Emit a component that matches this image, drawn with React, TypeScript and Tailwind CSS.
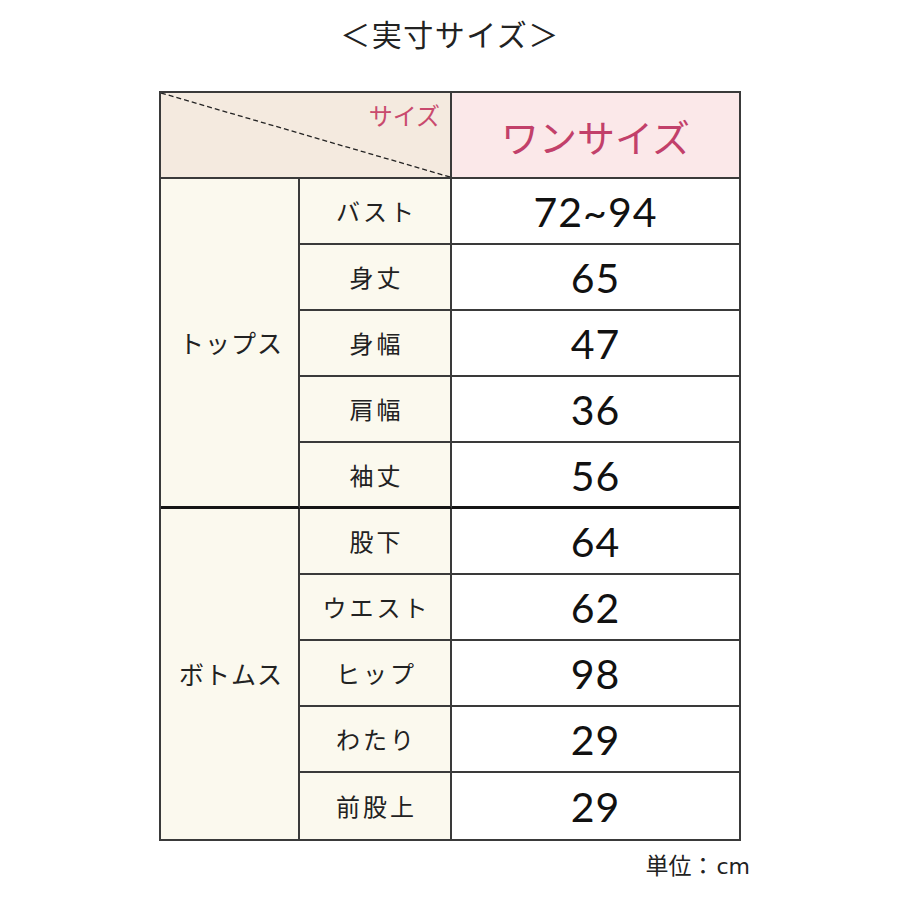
import type { ReactNode } from "react";

type Row = { label: string; value: string };

const TOPS: Row[] = [
  { label: "バスト", value: "72~94" },
  { label: "身丈", value: "65" },
  { label: "身幅", value: "47" },
  { label: "肩幅", value: "36" },
  { label: "袖丈", value: "56" },
];

const BOTTOMS: Row[] = [
  { label: "股下", value: "64" },
  { label: "ウエスト", value: "62" },
  { label: "ヒップ", value: "98" },
  { label: "わたり", value: "29" },
  { label: "前股上", value: "29" },
];

const JP = { fontFamily: '"Noto Sans CJK JP", "Noto Sans", sans-serif' };
const NUM = { fontFamily: 'Lato, "Noto Sans CJK JP", sans-serif' };

function Cell({
  children,
  className = "",
}: {
  children?: ReactNode;
  className?: string;
}) {
  return (
    <div className={`flex items-center justify-center ${className}`}>
      {children}
    </div>
  );
}

function Group({
  name,
  rows,
  last,
}: {
  name: string;
  rows: Row[];
  last?: boolean;
}) {
  const groupBorder = last ? "" : "border-b-[3px] border-b-[#151515]";
  return (
    <>
      <Cell
        className={`row-span-5 justify-start pl-[18px] bg-[#fbf9ee] border-r-2 border-[#3a3a3a] ${groupBorder}`}
      >
        <span style={JP} className="text-[25px] tracking-[1px] text-[#222]">
          {name}
        </span>
      </Cell>
      {rows.map((r, i) => {
        const isLast = i === rows.length - 1;
        const b = isLast ? groupBorder : "border-b-2 border-b-[#3a3a3a]";
        return (
          <div key={r.label} className="contents">
            <Cell className={`h-[66px] bg-[#fbf9ee] border-r-2 border-[#3a3a3a] ${b}`}>
              <span style={JP} className="pl-[3px] text-[24px] tracking-[3px] text-[#222]">
                {r.label}
              </span>
            </Cell>
            <Cell className={`h-[66px] bg-white ${b}`}>
              <span style={NUM} className="pt-[2px] text-[41px] tracking-[1px] text-[#111]">
                {r.value}
              </span>
            </Cell>
          </div>
        );
      })}
    </>
  );
}

export default function App() {
  return (
    <div className="flex min-h-[900px] w-[900px] flex-col items-center bg-white">
      <h1 style={JP} className="mt-[12px] text-[30px] leading-[42px] tracking-[1.5px] text-[#222]">
        ＜実寸サイズ＞
      </h1>

      <div className="mt-[37px] grid w-[582px] grid-cols-[139px_152px_1fr] border-2 border-[#3a3a3a]">
        {/* header */}
        <div className="relative col-span-2 h-[86px] border-b-2 border-r-2 border-[#3a3a3a] bg-[#f4eadf]">
          <svg className="absolute inset-0 h-full w-full" preserveAspectRatio="none">
            <line
              x1="0"
              y1="0"
              x2="100%"
              y2="100%"
              stroke="#222"
              strokeWidth="1.3"
              strokeDasharray="5 3"
            />
          </svg>
          <span
            style={JP}
            className="absolute right-[10px] top-[4px] text-[24px] text-[#c94a6e]"
          >
            サイズ
          </span>
        </div>
        <Cell className="h-[86px] border-b-2 border-[#3a3a3a] bg-[#fbe8e9]">
          <span style={JP} className="text-[38px] text-[#c2406a]">
            ワンサイズ
          </span>
        </Cell>

        <Group name="トップス" rows={TOPS} />
        <Group name="ボトムス" rows={BOTTOMS} last />
      </div>

      <div className="flex w-[900px] justify-end pr-[150px] pt-[6px]">
        <span style={JP} className="text-[23px] text-[#222]">
          単位：
          <span style={{ fontFamily: '"DejaVu Sans", sans-serif' }} className="pl-[2px] text-[22px]">
            cm
          </span>
        </span>
      </div>
    </div>
  );
}
